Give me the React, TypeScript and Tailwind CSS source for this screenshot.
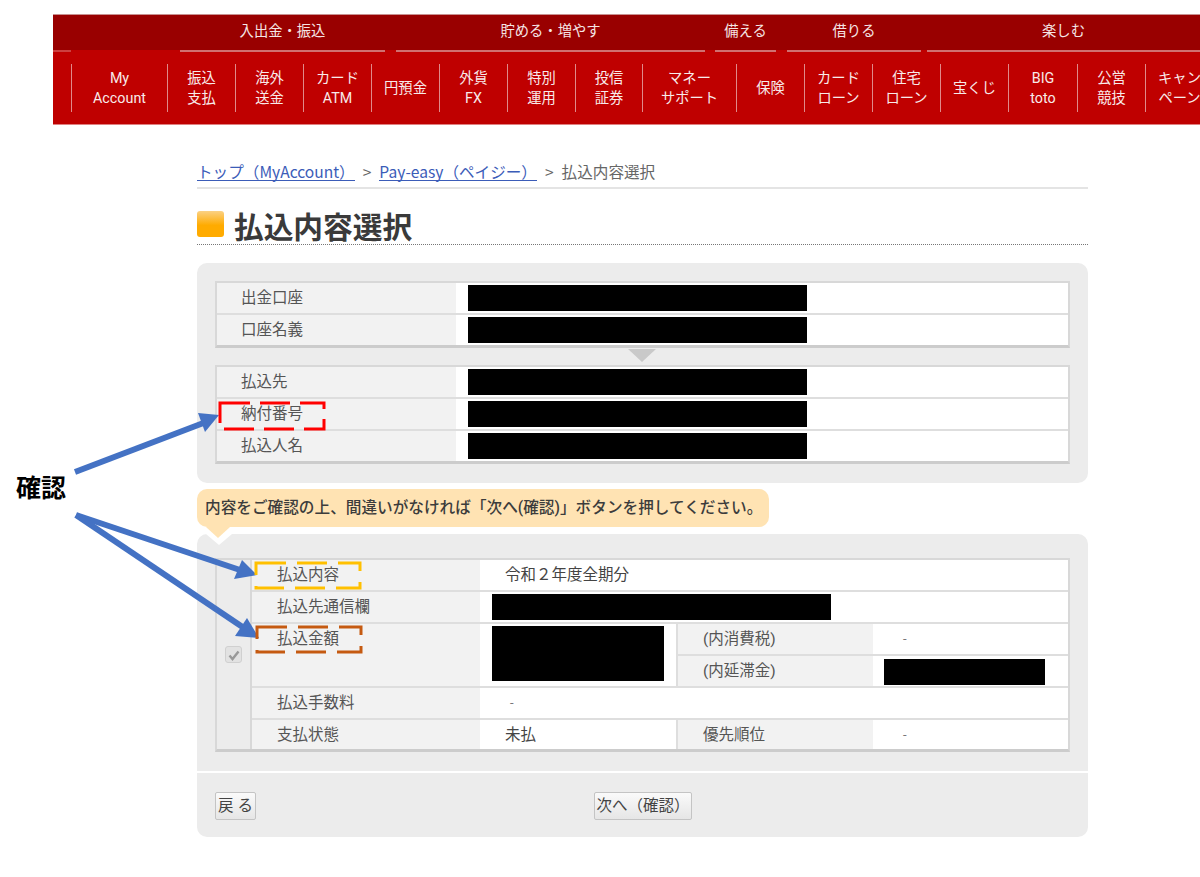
const font = { fontFamily: '"Roboto","Noto Sans CJK JP",sans-serif' };
const cjk = { fontFamily: '"Noto Sans CJK JP",sans-serif' };
const groups: [string, number, number][] = [
  ["入出金・振込", 205, 11],
  ["貯める・増やす", 309, 10],
  ["備える", 61, 11],
  ["借りる", 134, 6],
  ["楽しむ", 273, 0],
];
const items: [string, string, number][] = [
  ["My", "Account", 96], ["振込", "支払", 68], ["海外", "送金", 68], ["カード", "ATM", 68],
  ["円預金", "", 68], ["外貨", "FX", 68], ["特別", "運用", 68], ["投信", "証券", 67],
  ["マネー", "サポート", 94], ["保険", "", 68], ["カード", "ローン", 68], ["住宅", "ローン", 68],
  ["宝くじ", "", 68], ["BIG", "toto", 69], ["公営", "競技", 68], ["キャン", "ペーン", 68],
];

function Redact({ w, h, className = "" }: { w: string; h: string; className?: string }) {
  return <div className={`bg-black ${w} ${h} ${className}`} />;
}

function Row1({ label, last }: { label: string; last?: boolean }) {
  return (
    <div className={`flex ${last ? "h-[30px]" : "h-[32px] border-b-2 border-[#dedede]"}`}>
      <div className="w-[239px] shrink-0 bg-[#f2f2f2] pl-[24px] text-[15.5px] leading-[30px] text-[#555]">{label}</div>
      <div className="flex-1 bg-white pl-[12px] pt-[2px]">
        <Redact w="w-[339px]" h="h-[26px]" />
      </div>
    </div>
  );
}

function Th({ children, w }: { children: React.ReactNode; w: string }) {
  return <div className={`${w} shrink-0 bg-[#f2f2f2] pl-[25px] text-[15.5px] leading-[30px] text-[#555]`}>{children}</div>;
}

function Arrow({ line, head }: { line: [number, number, number, number]; head: string }) {
  return (
    <g>
      <line x1={line[0]} y1={line[1]} x2={line[2]} y2={line[3]} stroke="#4472c4" strokeWidth="6" />
      <polygon points={head} fill="#4472c4" />
    </g>
  );
}

function Annotation() {
  return (
    <svg className="pointer-events-none absolute left-0 top-0" width="1200" height="877" viewBox="0 0 1200 877" fill="none">
      <Arrow line={[75, 472, 206, 422]} head="219,415 198,413 205,432" />
      <Arrow line={[76, 515, 240, 570]} head="257,575 242,560 234,579" />
      <Arrow line={[76, 515, 244, 628]} head="259,638 247,618 235,636" />
      <rect x="220" y="403" width="104" height="26" stroke="#ff0000" strokeWidth="3" strokeDasharray="30 10" />
      <rect x="256" y="563" width="104" height="25" stroke="#ffc000" strokeWidth="3" strokeDasharray="30 11" />
      <rect x="257" y="627" width="104" height="25" stroke="#c55a11" strokeWidth="3" strokeDasharray="30 11" />
    </svg>
  );
}

export default function App() {
  return (
    <div className="relative h-[877px] w-[1200px] overflow-hidden bg-white" style={font}>
      <nav className="ml-[53px] mt-[14px] h-[111px] w-[1147px] overflow-hidden">
        <div className="flex h-[36px] border-t border-[#c89090] bg-[#990000] pl-[127px]">
          {groups.map(([g, w, m]) => (
            <div key={g} style={{ width: w, marginRight: m }} className="shrink-0 text-center text-[14.3px] leading-[33px] text-[#f5e5e5]">
              {g}
            </div>
          ))}
        </div>
        <div className="flex h-[2px] bg-[#bf0000]">
          <div className="mr-[109px] h-[2px] w-[18px] bg-[#cc4040]" />
          {groups.map(([g, w, m]) => (
            <div key={g} style={{ width: w, marginRight: m }} className="h-[2px] shrink-0 bg-[#d07070]" />
          ))}
        </div>
        <div className="flex h-[73px] items-center border-b border-[#e08080] bg-[#bf0000] pl-[18px]">
          {items.map(([a, b, w], i) => (
            <div key={i} style={{ width: w }} className="flex h-[48px] shrink-0 flex-col items-center justify-center whitespace-nowrap border-l-[1.5px] border-[#e08a8a] text-[14.3px] leading-[20px] text-[#f8eaea]">
              <span>{a}</span>
              {b && <span>{b}</span>}
            </div>
          ))}
        </div>
      </nav>

      <main className="ml-[197px] w-[891px]">
        <div style={cjk} className="mt-[38px] flex h-[26px] items-start gap-[8px] border-b-2 border-[#e4e4e4] text-[15.6px] leading-[17px] text-[#666]">
          <span className="border-b border-[#3b5cb8] text-[#3b5cb8]">トップ（MyAccount）</span>
          <span>&gt;</span>
          <span className="border-b border-[#3b5cb8] text-[#3b5cb8]">Pay-easy（ペイジー）</span>
          <span>&gt;</span>
          <span>払込内容選択</span>
        </div>
        <div className="box-content flex h-[33px] items-start border-b border-dotted border-[#777] pt-[22px]">
          <div className="h-[26px] w-[27px] shrink-0 rounded-[3px] [background-image:linear-gradient(#fbd184,#ffab00_55%)]" />
          <h1 className="-mt-[2px] ml-[10px] text-[29.7px] font-bold leading-[38px] text-[#3a3a3a]">払込内容選択</h1>
        </div>

        <section className="mt-[18px] h-[220px] rounded-[10px] bg-[#ececec] px-[18px] pt-[18px]">
          <div className="border-x-2 border-b-[3px] border-t-2 border-x-[#d8d8d8] border-b-[#cccccc] border-t-[#d8d8d8]">
            <Row1 label="出金口座" />
            <Row1 label="口座名義" last />
          </div>
          <div className="mb-[3px] ml-[413px] mt-[1px] h-0 w-0 border-x-[14.5px] border-t-[13px] border-x-transparent border-t-[#c9c9c9]" />
          <div className="border-x-2 border-b-[3px] border-t-2 border-x-[#d8d8d8] border-b-[#cccccc] border-t-[#d8d8d8]">
            <Row1 label="払込先" />
            <Row1 label="納付番号" />
            <Row1 label="払込人名" last />
          </div>
        </section>

        <div className="relative z-10 mt-[6px] h-[38px] w-[572px] rounded-[10px] bg-[#ffe3b3] pl-[8px] text-[15.65px] font-medium leading-[37px] text-[#3c3c3c]">
          内容をご確認の上、間違いがなければ「次へ(確認)」ボタンを押してください。
          <div className="absolute left-[9px] top-[38px] h-0 w-0 border-x-[12.5px] border-t-[11px] border-x-transparent border-t-[#ffe3b3]" />
        </div>

        <section className="relative mt-[7px] h-[237px] rounded-t-[10px] bg-[#ececec] px-[18px] pt-[24px]">
          <div className="absolute left-[9px] top-0 h-0 w-0 border-x-[13px] border-t-[11px] border-x-transparent border-t-white" />
          <div className="flex border-x-2 border-b-[3px] border-t-2 border-x-[#d8d8d8] border-b-[#cccccc] border-t-[#d8d8d8]">
            <div className="flex w-[35px] shrink-0 items-center justify-center border-r-2 border-[#d8d8d8] bg-[#ececec]">
              <div className="flex h-[17px] w-[17px] items-center justify-center rounded-[3px] border border-[#d0d0d0] bg-[#e2e2e2]">
                <svg width="12" height="12" viewBox="0 0 12 12"><path d="M1.5 6.5 L4.5 10 L10.5 2.5" stroke="#999" strokeWidth="2.4" fill="none" /></svg>
              </div>
            </div>
            <div className="flex-1 bg-white">
              <div className="flex h-[32px] border-b-2 border-[#dedede]">
                <Th w="w-[228px]">払込内容</Th>
                <div className="pl-[25px] text-[15.5px] leading-[30px] text-[#444]">令和２年度全期分</div>
              </div>
              <div className="flex h-[32px] border-b-2 border-[#dedede]">
                <Th w="w-[228px]">払込先通信欄</Th>
                <div className="pl-[12px] pt-[2px]"><Redact w="w-[339px]" h="h-[26px]" /></div>
              </div>
              <div className="flex h-[64px] border-b-2 border-[#dedede]">
                <Th w="w-[228px]">払込金額</Th>
                <div className="w-[196px] shrink-0 pl-[12px] pt-[2px]"><Redact w="w-[172px]" h="h-[55px]" /></div>
                <div className="flex-1 border-l-2 border-[#dedede]">
                  <div className="flex h-[32px] border-b-2 border-[#dedede]">
                    <Th w="w-[195px]">(内消費税)</Th>
                    <div className="pl-[30px] text-[13px] leading-[30px] text-[#777]">-</div>
                  </div>
                  <div className="flex h-[30px]">
                    <Th w="w-[195px]">(内延滞金)</Th>
                    <div className="pl-[11px] pt-[3px]"><Redact w="w-[161px]" h="h-[26px]" /></div>
                  </div>
                </div>
              </div>
              <div className="flex h-[32px] border-b-2 border-[#dedede]">
                <Th w="w-[228px]">払込手数料</Th>
                <div className="pl-[30px] text-[13px] leading-[30px] text-[#777]">-</div>
              </div>
              <div className="flex h-[29px]">
                <Th w="w-[228px]">支払状態</Th>
                <div className="w-[196px] shrink-0 pl-[25px] text-[15.5px] leading-[30px] text-[#444]">未払</div>
                <div className="flex flex-1 border-l-2 border-[#dedede]">
                  <Th w="w-[195px]">優先順位</Th>
                  <div className="pl-[30px] text-[13px] leading-[30px] text-[#777]">-</div>
                </div>
              </div>
            </div>
          </div>
        </section>

        <section className="relative mt-[2px] h-[64px] rounded-b-[10px] bg-[#ececec]">
          <div className="flex items-start pl-[18px] pt-[19px]">
            <button className="h-[28px] w-[41px] whitespace-nowrap rounded-[2px] border border-[#c4c4c4] bg-gradient-to-b from-[#fafafa] to-[#e6e6e6] text-[15.5px] leading-[24px] text-[#444]">戻 る</button>
            <button className="ml-[338px] h-[28px] w-[98px] whitespace-nowrap rounded-[2px] border border-[#c4c4c4] bg-gradient-to-b from-[#fafafa] to-[#e6e6e6] text-[15.5px] leading-[24px] text-[#444]">次へ（確認）</button>
          </div>
        </section>
      </main>

      <div className="absolute left-[16px] top-[472px] text-[25px] font-bold leading-[34px] text-black">確認</div>
      <Annotation />
    </div>
  );
}
